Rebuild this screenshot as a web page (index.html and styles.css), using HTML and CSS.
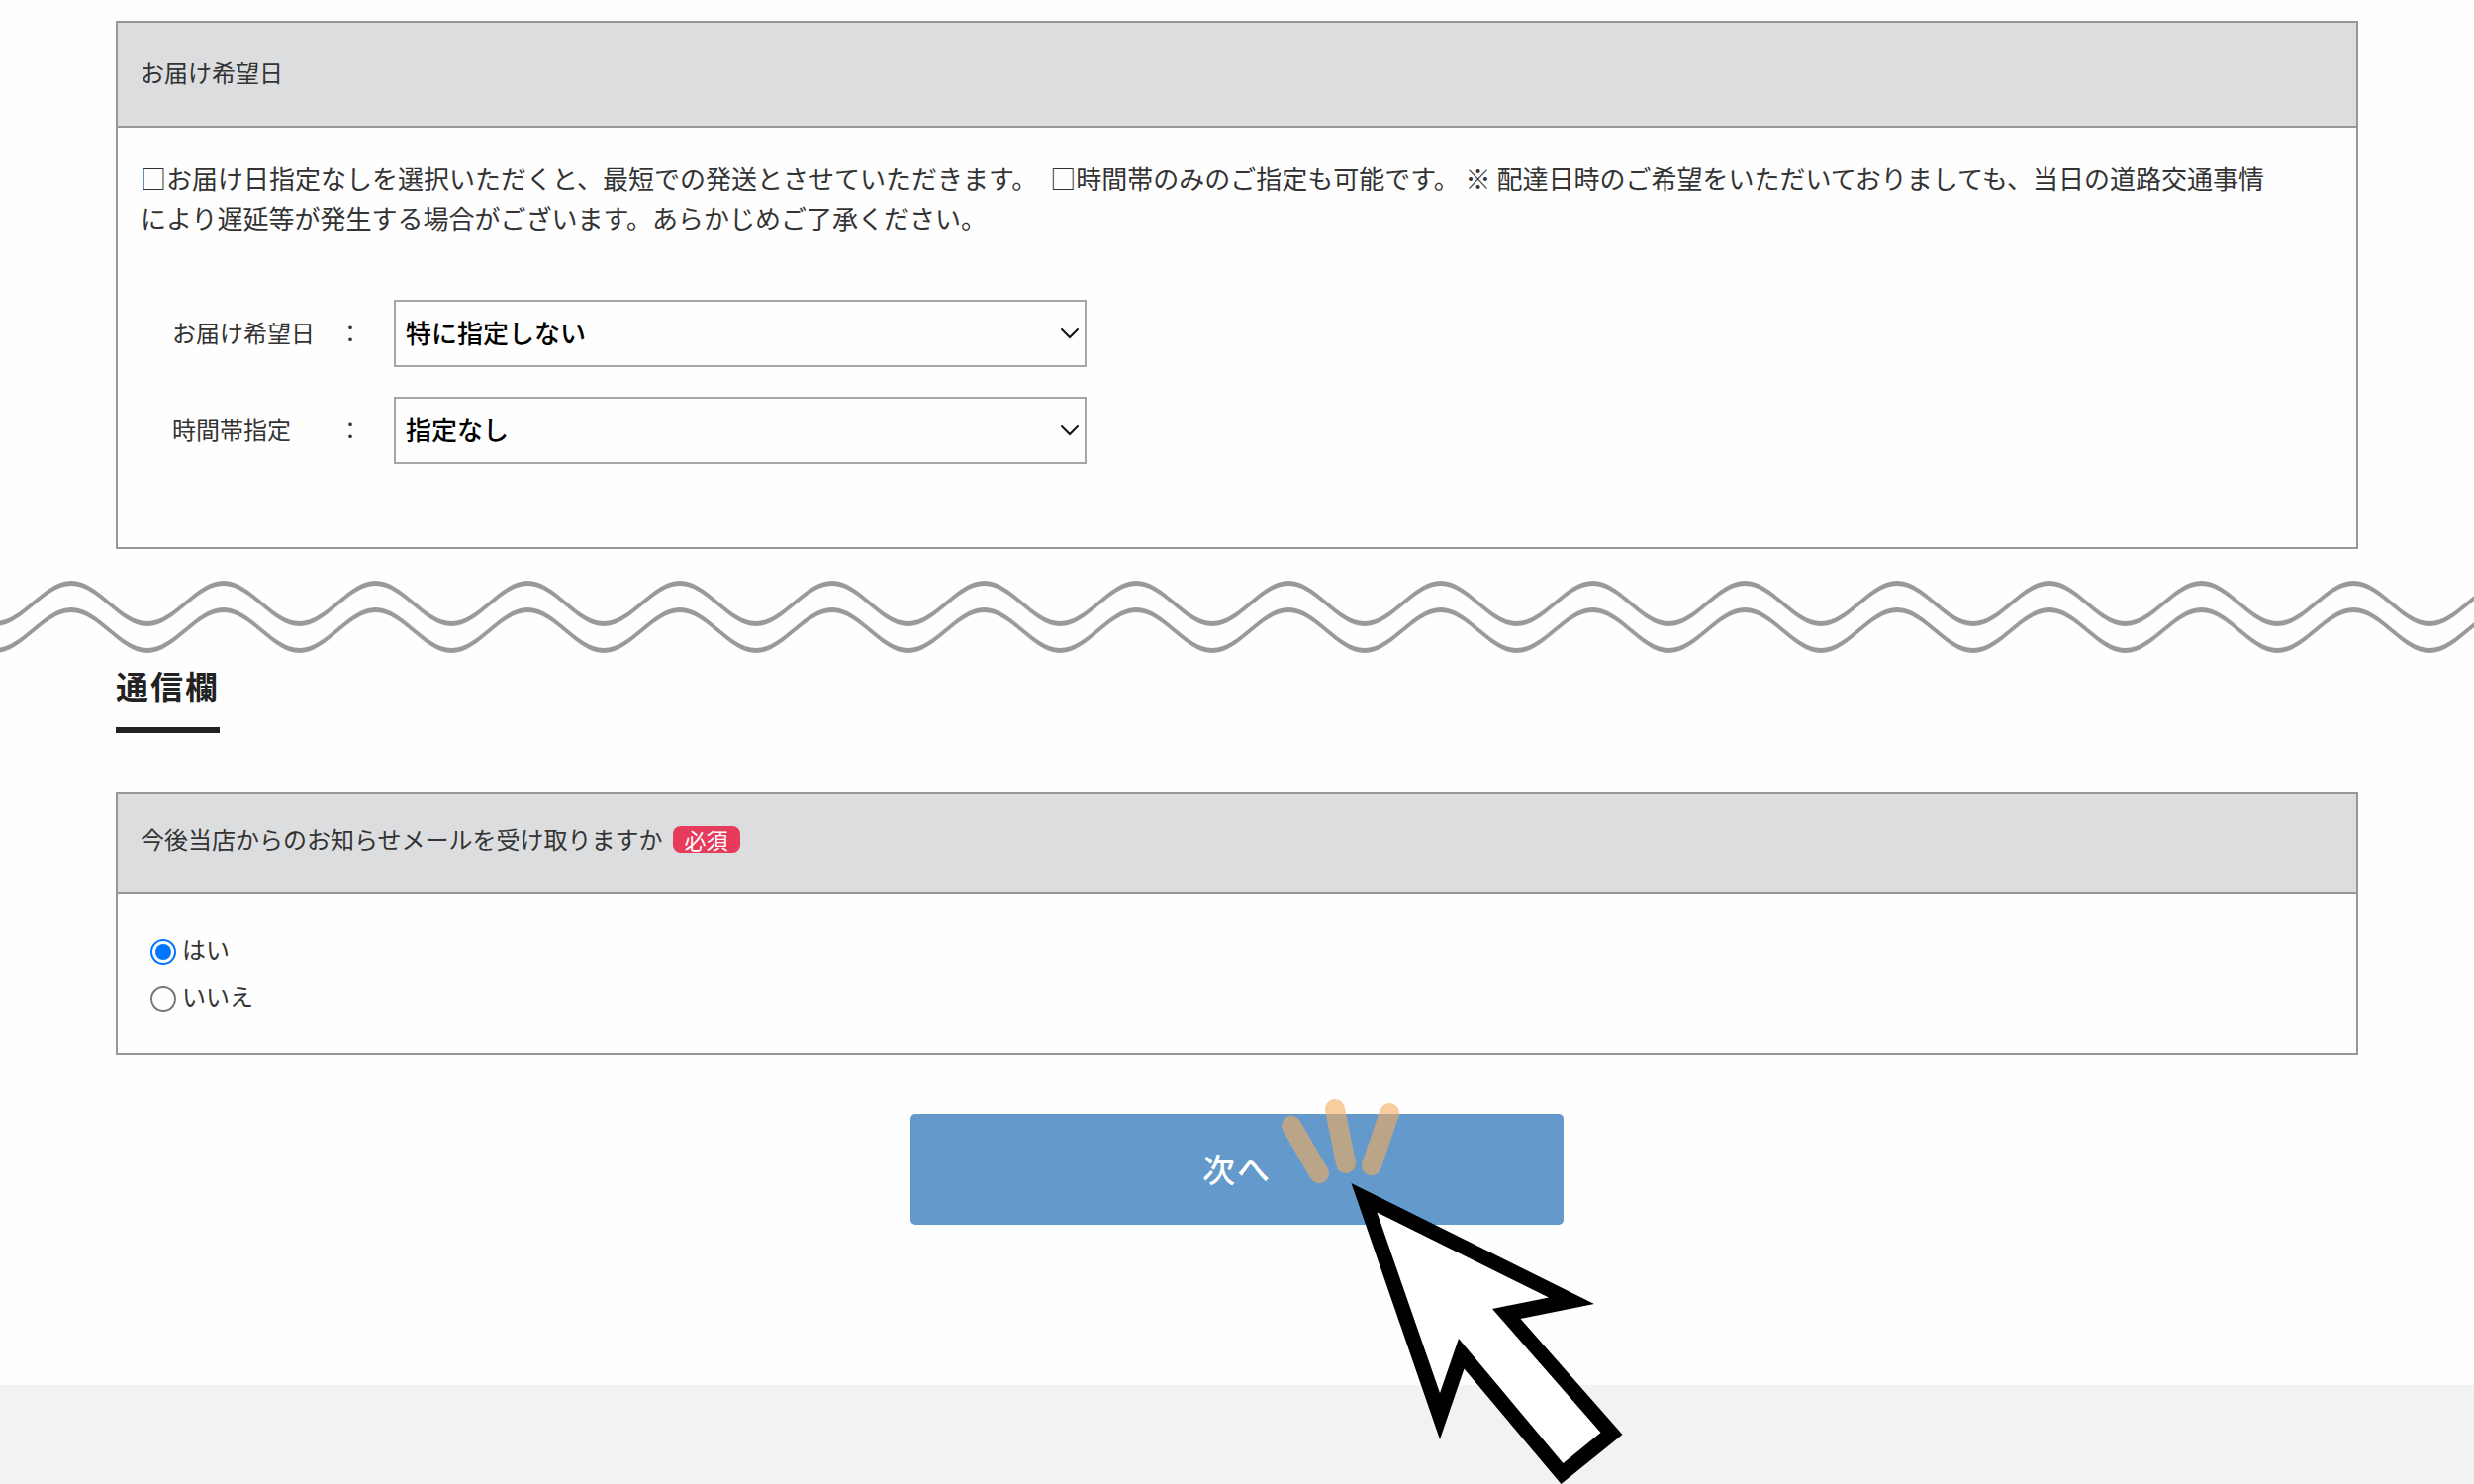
FILE: index.html
```html
<!DOCTYPE html>
<html lang="ja">
<head>
  <meta charset="UTF-8">
  <meta name="viewport" content="width=device-width, initial-scale=1.0">
  <title>お届け希望日・通信欄</title>
  <link rel="stylesheet" href="styles.css">
</head>
<body>
  <form class="order-form">
    <section class="panel delivery">
      <h3 class="panel-head">お届け希望日</h3>
      <div class="panel-body">
        <p class="note">□お届け日指定なしを選択いただくと、最短での発送とさせていただきます。　□時間帯のみのご指定も可能です。 ※ 配達日時のご希望をいただいておりましても、当日の道路交通事情<br>により遅延等が発生する場合がございます。あらかじめご了承ください。</p>
        <div class="field">
          <label for="date">お届け希望日</label>
          <span class="colon">：</span>
          <div class="select-box">
            <select id="date">
              <option>特に指定しない</option>
            </select>
            <svg class="arrow" width="18" height="12" viewBox="0 0 18 12"><path d="M1 2l8 8 8-8"/></svg>
          </div>
        </div>
        <div class="field">
          <label for="time">時間帯指定</label>
          <span class="colon">：</span>
          <div class="select-box">
            <select id="time">
              <option>指定なし</option>
            </select>
            <svg class="arrow" width="18" height="12" viewBox="0 0 18 12"><path d="M1 2l8 8 8-8"/></svg>
          </div>
        </div>
      </div>
    </section>

    <!-- 省略を示す波線 -->
    <svg class="wave" width="100%" height="78" aria-hidden="true">
      <defs>
        <pattern id="wave" x="72" y="0" width="153.75" height="78" patternUnits="userSpaceOnUse">
          <path id="line" d="M-1 4H0C28 4 49 45 76.875 45S125.75 4 153.75 4h1v5h-1C125.75 9 104.75 50 76.875 50S28 9 0 9h-1z"/>
          <use href="#line" y="27"/>
        </pattern>
      </defs>
      <rect width="100%" height="78" fill="url(#wave)"/>
    </svg>

    <h2 class="title">通信欄</h2>

    <section class="panel contact">
      <h3 class="panel-head">今後当店からのお知らせメールを受け取りますか<span class="badge">必須</span></h3>
      <div class="panel-body">
        <div class="radio">
          <input type="radio" name="mail" id="yes" checked>
          <label for="yes">はい</label>
        </div>
        <div class="radio">
          <input type="radio" name="mail" id="no">
          <label for="no">いいえ</label>
        </div>
      </div>
    </section>

    <div class="submit">
      <button type="button">次へ</button>
      <svg class="cursor" width="370" height="400" viewBox="1280 1100 370 400" aria-hidden="true">
        <g class="rays">
          <path d="M1305 1138l28 48"/>
          <path d="M1349 1121l11 55"/>
          <path d="M1404 1125l-18 53"/>
        </g>
        <path d="M1365.5 1196L1611 1318 1536.5 1333 1639.5 1450 1577.5 1500 1479.5 1383.5 1455 1455z"/>
        <path d="M1391.5 1225.5L1565 1311.5 1508 1323 1617.5 1448 1579.5 1479 1474 1353 1455 1408z" fill="#fff"/>
      </svg>
    </div>
  </form>
  <footer></footer>
</body>
</html>
```
FILE: styles.css
```css
* {
  margin: 0;
  padding: 0;
  box-sizing: border-box;
}

body {
  display: flex;
  flex-direction: column;
  min-height: 100vh;
  background-color: #fefefe;
  color: #333;
  font-family: "Noto Sans CJK JP", sans-serif;
  font-size: 24px;
  line-height: 36px;
}

.order-form {
  padding-top: 21px;
}

.panel {
  margin: 0 117px;
  border: 2px solid #969898;
}

.panel-head {
  padding: 32px 23px 36px;
  background-color: #dcddde;
  border-bottom: 2px solid #969898;
  font-size: 24px;
  font-weight: normal;
}

.delivery .panel-body {
  padding: 31px 23px 84px;
}

.note {
  margin-bottom: 63px;
  font-size: 26px;
  line-height: 40px;
}

.field {
  display: flex;
  align-items: center;
  padding-left: 32px;
}

.field + .field {
  margin-top: 30px;
}

.field label {
  width: 168px;
  padding-bottom: 2px;
}

.field .colon {
  width: 56px;
  padding-bottom: 2px;
}

.select-box {
  position: relative;
  width: 700px;
}

select {
  display: block;
  width: 100%;
  height: 68px;
  padding: 0 10px 4px;
  border: 2px solid #a6a6a6;
  background-color: #fefefe;
  color: #000;
  font-family: inherit;
  font-size: 26px;
  font-weight: 500;
  appearance: none;
}

.arrow {
  position: absolute;
  top: 28px;
  right: 8px;
  fill: none;
  stroke: #111;
  stroke-width: 2;
  stroke-linecap: round;
  pointer-events: none;
}

.wave {
  display: block;
  margin-top: 28px;
  fill: #999;
}

.title {
  width: fit-content;
  margin: 8px 117px 60px;
  padding-bottom: 18px;
  border-bottom: 6px solid #222;
  color: #222;
  font-size: 33px;
  line-height: 48px;
  letter-spacing: 2px;
}

.contact .panel-head {
  display: flex;
  align-items: center;
  padding: 27px 23px 36px;
}

.badge {
  margin-left: 10px;
  padding: 0 12px;
  border-radius: 8px;
  background-color: #e83a5a;
  color: #fff;
  font-size: 22px;
  line-height: 27px;
}

.contact .panel-body {
  padding: 31px 33px 33px;
}

.radio {
  display: flex;
  align-items: center;
  height: 48px;
}

.radio input {
  display: grid;
  place-items: center;
  width: 26px;
  height: 26px;
  margin-top: 6px;
  margin-right: 6px;
  border: 2px solid #767676;
  border-radius: 50%;
  appearance: none;
}

.radio input:checked {
  border-color: #0075ff;
}

.radio input:checked::before {
  content: "";
  width: 16px;
  height: 16px;
  border-radius: 50%;
  background-color: #0075ff;
}

.submit {
  position: relative;
  width: 660px;
  margin: 60px auto 162px;
}

.submit button {
  display: block;
  width: 100%;
  height: 112px;
  padding-bottom: 2px;
  border: none;
  border-radius: 5px;
  background-color: #6399cb;
  color: #fff;
  font-family: inherit;
  font-size: 33px;
  font-weight: 500;
  letter-spacing: 2px;
  cursor: pointer;
}

.cursor {
  position: absolute;
  top: -26px;
  left: 360px;
  pointer-events: none;
}

.rays {
  fill: none;
  stroke: #f5ad5e;
  stroke-width: 20;
  stroke-linecap: round;
  opacity: 0.6;
}

footer {
  flex: 1;
  min-height: 100px;
  background-color: #f1f2f4;
}
```
